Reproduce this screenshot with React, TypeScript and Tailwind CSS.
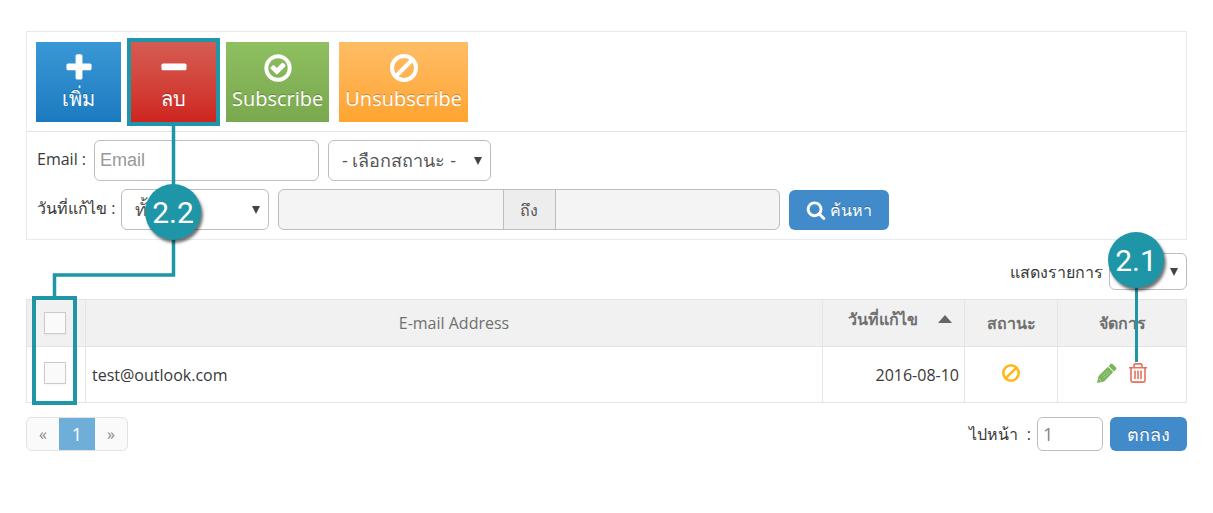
import { useState } from "react";
import type { ReactNode } from "react";
import clsx from "clsx";

const ICONS = {
  plus: "M1600 736v192q0 40-28 68t-68 28h-416v416q0 40-28 68t-68 28h-192q-40 0-68-28t-28-68v-416h-416q-40 0-68-28t-28-68v-192q0-40 28-68t68-28h416v-416q0-40 28-68t68-28h192q40 0 68 28t28 68v416h416q40 0 68 28t28 68z",
  minus: "M1600 736v192q0 40-28 68t-68 28h-1216q-40 0-68-28t-28-68v-192q0-40 28-68t68-28h1216q40 0 68 28t28 68z",
  check:
    "M1299 813l-422 422q-19 19-45 19t-45-19l-294-294q-19-19-19-45t19-45l102-102q19-19 45-19t45 19l147 147 275-275q19-19 45-19t45 19l102 102q19 19 19 45t-19 45zm141 83q0-148-73-273t-198-198-273-73-273 73-198 198-73 273 73 273 198 198 273 73 273-73 198-198 73-273zm224 0q0 209-103 385.5t-279.5 279.5-385.5 103-385.5-103-279.5-279.5-103-385.5 103-385.5 279.5-279.5 385.5-103 385.5 103 279.5 279.5 103 385.5z",
  search:
    "M1216 832q0-185-131.5-316.5t-316.5-131.5-316.5 131.5-131.5 316.5 131.5 316.5 316.5 131.5 316.5-131.5 131.5-316.5zm512 832q0 52-38 90t-90 38q-54 0-90-38l-343-342q-179 124-399 124-143 0-273.5-55.5t-225-150-150-225-55.5-273.5 55.5-273.5 150-225 225-150 273.5-55.5 273.5 55.5 225 150 150 225 55.5 273.5q0 220-124 399l343 343q37 37 37 90z",
};

function Glyph({ name, className }: { name: keyof typeof ICONS; className: string }) {
  return (
    <svg viewBox="0 0 1792 1792" fill="currentColor" aria-hidden="true" className={className}>
      <path d={ICONS[name]} />
    </svg>
  );
}

function Ban({ className, thickness }: { className: string; thickness: number }) {
  return (
    <svg viewBox="0 0 28 28" fill="none" stroke="currentColor" strokeWidth={thickness} aria-hidden="true" className={className}>
      <circle cx="14" cy="14" r={14 - thickness / 2} />
      <path d="M5.5 22.5l17-17" />
    </svg>
  );
}

function Pencil() {
  return (
    <svg viewBox="0 0 20 20" fill="#7ab55c" aria-hidden="true" className="size-5">
      <path d="M13.600 1q1-1 2 0L19 4.400q1 1 0 2l-2 2L11.600 3z" />
      <path d="M10.900 3.700l5.400 5.400-9.200 9.300L0 20l1.600-7z" />
      <path d="M5 13.500l6.500-6.500M6.700 15.200l6.500-6.500" stroke="#fff" strokeWidth=".35" />
      <path d="M2 16l2 2" stroke="#fff" strokeWidth=".5" />
    </svg>
  );
}

function Trash() {
  return (
    <svg viewBox="0 0 18 20" fill="none" stroke="#e4725f" strokeWidth="1.600" aria-hidden="true" className="h-5 w-[18px]">
      <path d="M0 4.700h18M2 5v12.500q0 1.600 1.600 1.600h10.800q1.600 0 1.600-1.600V5M5 4.500V2.200q0-1.300 1.300-1.300h5.400Q13 .9 13 2.200v2.300" />
      <path d="M6 7.500v8.500M9 7.500v8.500M12 7.500v8.500" />
    </svg>
  );
}

function ToolButton({ color, icon, children }: { color: string; icon: ReactNode; children: ReactNode }) {
  return (
    <button
      type="button"
      className={clsx(
        "flex h-20 min-w-[85px] flex-col items-center bg-linear-to-b px-[6px] pt-3 text-[20px] leading-7 text-white text-shadow-[0_-1px_0_rgba(0,0,0,0.25)]",
        color
      )}
    >
      <span className="flex h-[31px] items-start">{icon}</span>
      {children}
    </button>
  );
}

type SelectProps = { id: string; label?: string; options: string[]; className: string };

function Select({ id, label, options, className }: SelectProps) {
  return (
    <div className={clsx("relative", className)}>
      <select
        id={id}
        aria-label={label}
        className="size-full appearance-none rounded-md border border-[#bbbdc2] bg-white pl-[13px] text-[18px] text-[#555]"
      >
        {options.map((o) => (
          <option key={o}>{o}</option>
        ))}
      </select>
      <svg viewBox="0 0 8 8" fill="#444" aria-hidden="true" className="pointer-events-none absolute top-1/2 right-[9px] size-2 -translate-y-1/2">
        <path d="M0 0h8L4 8z" />
      </svg>
    </div>
  );
}

function Check({ label }: { label: string }) {
  return (
    <input
      type="checkbox"
      aria-label={label}
      className="block size-[22px] appearance-none border border-[#ccc] bg-[#fafafa] shadow-xs checked:bg-[#1e96a8]"
    />
  );
}

function Bubble({ children, className }: { children: ReactNode; className: string }) {
  return (
    <div
      className={clsx(
        "pointer-events-none absolute flex size-14 items-center justify-center rounded-full bg-[#1e96a8] font-[Roboto,sans-serif] text-[30px] text-white shadow-[2px_3px_3px_rgba(0,0,0,0.55)]",
        className
      )}
    >
      {children}
    </div>
  );
}

export default function App() {
  const [email, setEmail] = useState("");
  const [page, setPage] = useState("1");

  return (
    <div className="relative bg-white px-[26px] pt-[31px] pb-8 font-['Open_Sans','Noto_Sans',sans-serif] text-[16px] text-[#393939]">
      <section className="border border-[#e8ebec]">
        <div className="flex gap-[10px] border-b border-[#e0e4e6] px-[9px] pt-[10px] pb-[9px]">
          <ToolButton color="from-[#3b98d6] to-[#1b7abf]" icon={<Glyph name="plus" className="-mt-0.5 size-8" />}>
            เพิ่ม
          </ToolButton>
          <ToolButton color="from-[#d55b52] to-[#cf231f]" icon={<Glyph name="minus" className="-mt-0.5 size-8" />}>
            ลบ
          </ToolButton>
          <ToolButton color="from-[#8ebf60] to-[#7aa84e]" icon={<Glyph name="check" className="-mt-0.5 size-8" />}>
            Subscribe
          </ToolButton>
          <ToolButton color="from-[#ffbd65] to-[#ffa42e]" icon={<Ban thickness={4} className="size-7" />}>
            Unsubscribe
          </ToolButton>
        </div>
        <form className="flex flex-col gap-2 px-[10px] pt-2 pb-[9px]" onSubmit={(e) => e.preventDefault()}>
          <div className="flex items-center">
            <label htmlFor="email" className="mr-2 pb-1">
              Email :
            </label>
            <input
              id="email"
              type="text"
              value={email}
              onChange={(e) => setEmail(e.target.value)}
              placeholder="Email"
              className="h-[41px] w-[225px] rounded-md border border-[#bbbdc2] px-[5px] font-['Liberation_Sans',sans-serif] text-[18px] placeholder:text-[#999]"
            />
            <Select id="status" label="สถานะ" options={["- เลือกสถานะ -"]} className="ml-[9px] h-[41px] w-[163px]" />
          </div>
          <div className="flex items-center">
            <label htmlFor="modified" className="mr-[6px] pb-1">
              วันที่แก้ไข :
            </label>
            <Select id="modified" options={["ทั้งหมด"]} className="h-[41px] w-[148px]" />
            <div className="ml-[9px] flex h-[41px] w-[502px] overflow-hidden rounded-md border border-[#bbbdc2] bg-[#f4f4f4]">
              <input type="text" aria-label="จากวันที่" disabled className="min-w-0 flex-1" />
              <span className="flex w-[53px] items-center justify-center border-x border-[#bbbdc2] bg-[#ededed] text-[#555]">ถึง</span>
              <input type="text" aria-label="ถึงวันที่" disabled className="min-w-0 flex-1" />
            </div>
            <button
              type="submit"
              className="ml-[9px] flex h-10 w-[100px] items-center justify-center gap-1 rounded-md bg-[#428bca] text-white text-shadow-[0_-1px_0_rgba(0,0,0,0.25)]"
            >
              <Glyph name="search" className="size-5" />
              ค้นหา
            </button>
          </div>
        </form>
      </section>

      <div className="flex items-center justify-end gap-[6px] pt-[13px] pb-[9px]">
        <label htmlFor="per-page">แสดงรายการ</label>
        <Select id="per-page" options={["10", "20", "50"]} className="h-[37px] w-[78px]" />
      </div>

      <table className="w-full table-fixed border-collapse border border-[#e2e5e7]">
        <colgroup>
          <col className="w-[59px]" />
          <col />
          <col className="w-[142px]" />
          <col className="w-[93px]" />
          <col className="w-[129px]" />
        </colgroup>
        <thead>
          <tr className="h-[47px] border-b border-[#e2e5e7] bg-[#f1f1f1] text-[#707070]">
            <th className="border-r border-[#e2e5e7] pl-[17px]">
              <Check label="เลือกทั้งหมด" />
            </th>
            <th className="border-r border-[#e2e5e7] font-medium">E-mail Address</th>
            <th className="border-r border-[#e2e5e7] pl-3">
              <span className="flex items-center justify-center gap-5 pb-2">
                วันที่แก้ไข
                <svg viewBox="0 0 14 8" fill="#666" aria-hidden="true" className="h-2 w-[14px]">
                  <path d="M0 8l7-8 7 8z" />
                </svg>
              </span>
            </th>
            <th className="border-r border-[#e2e5e7]">สถานะ</th>
            <th>จัดการ</th>
          </tr>
        </thead>
        <tbody>
          <tr className="h-[56px]">
            <td className="border-r border-[#e2e5e7] pb-[3px] pl-[17px]">
              <Check label="test@outlook.com" />
            </td>
            <td className="border-r border-[#e2e5e7] px-[6px]">test@outlook.com</td>
            <td className="border-r border-[#e2e5e7] px-[5px] text-right">2016-08-10</td>
            <td className="border-r border-[#e2e5e7] pb-[3px]">
              <Ban thickness={4} className="mx-auto size-[18px] text-[#ffb616]" />
            </td>
            <td className="pb-[3px]">
              <div className="flex items-center justify-center gap-3">
                <button type="button" aria-label="แก้ไข">
                  <Pencil />
                </button>
                <button type="button" aria-label="ลบ">
                  <Trash />
                </button>
              </div>
            </td>
          </tr>
        </tbody>
      </table>

      <div className="mt-[14px] flex items-start justify-between">
        <nav className="flex h-[34px] overflow-hidden rounded-md border border-[#e2e2e2] bg-[#fafafa] text-[#888]">
          <a href="#prev" className="flex w-8 items-center justify-center">«</a>
          <a href="#1" className="-my-px flex w-9 items-center justify-center bg-[#6faed9] text-[18px] text-white">1</a>
          <a href="#next" className="flex w-8 items-center justify-center">»</a>
        </nav>
        <div className="flex items-center">
          <label htmlFor="page" className="mr-[6px]">ไปหน้า&nbsp; :</label>
          <input
            id="page"
            type="text"
            value={page}
            onChange={(e) => setPage(e.target.value)}
            className="mr-[7px] h-[34px] w-[66px] rounded-md border border-[#bbbdc2] px-[5px] text-[18px] text-[#858585]"
          />
          <button
            type="button"
            className="h-[34px] w-[77px] rounded-md bg-[#428bca] text-[18px] text-white text-shadow-[0_-1px_0_rgba(0,0,0,0.25)]"
          >
            ตกลง
          </button>
        </div>
      </div>

      {/* numbered callouts */}
      <div className="pointer-events-none absolute top-[38px] left-[127px] h-[88px] w-[93px] border-4 border-[#1e96a8]" />
      <div className="pointer-events-none absolute top-[296px] left-8 h-[109px] w-[45px] border-4 border-[#1e96a8]" />
      <svg viewBox="0 0 130 176" fill="none" stroke="#1e96a8" strokeWidth="3.500" aria-hidden="true" className="pointer-events-none absolute top-[124px] left-[50px] h-[176px] w-[130px]">
        <path d="M123.500 0v151H4.500v24" />
      </svg>
      <Bubble className="top-[184px] left-[145px]">2.2</Bubble>
      <div className="pointer-events-none absolute top-[280px] right-[75px] h-[82px] w-[3px] bg-[#1e96a8]" />
      <Bubble className="top-[232px] right-[49px]">2.1</Bubble>
    </div>
  );
}
